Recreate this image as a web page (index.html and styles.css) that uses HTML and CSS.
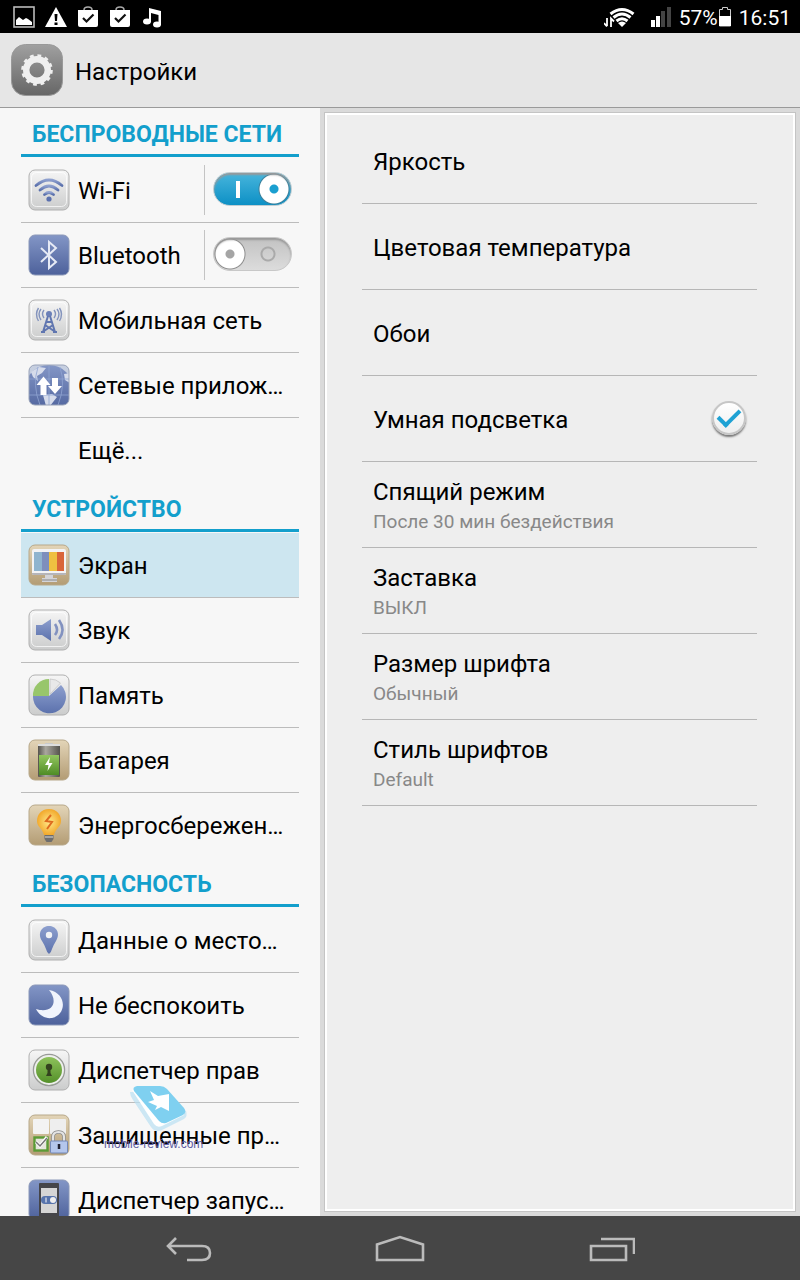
FILE: index.html
```html
<!DOCTYPE html>
<html lang="ru">
<head>
    <meta charset="UTF-8">
    <meta name="viewport" content="width=device-width, initial-scale=1.0">
    <title>Настройки</title>
    <link rel="stylesheet" href="styles.css">
</head>
<body>
    <!-- общие градиенты для иконок -->
    <svg class="defs" aria-hidden="true">
        <defs>
            <linearGradient id="light" x1="0" y1="0" x2="0" y2="1"><stop offset="0" stop-color="#f6f6f6"/><stop offset="1" stop-color="#cbcccc"/></linearGradient>
            <linearGradient id="navy" x1="0" y1="0" x2="0" y2="1"><stop offset="0" stop-color="#8396c6"/><stop offset="1" stop-color="#4d619b"/></linearGradient>
            <linearGradient id="tan" x1="0" y1="0" x2="0" y2="1"><stop offset="0" stop-color="#e3d5b8"/><stop offset="1" stop-color="#b39c74"/></linearGradient>
            <linearGradient id="ink" x1="0" y1="0" x2="0" y2="1"><stop offset="0" stop-color="#8d9fce"/><stop offset="1" stop-color="#5c72ad"/></linearGradient>
            <linearGradient id="green" x1="0" y1="0" x2="0" y2="1"><stop offset="0" stop-color="#93c660"/><stop offset="1" stop-color="#4f8c25"/></linearGradient>
            <linearGradient id="gray" x1="0" y1="0" x2="0" y2="1"><stop offset="0" stop-color="#a0a0a0"/><stop offset="1" stop-color="#666"/></linearGradient>
            <linearGradient id="metal" x1="0" y1="0" x2="1" y2="0"><stop offset="0" stop-color="#55534d"/><stop offset=".35" stop-color="#aaa79e"/><stop offset="1" stop-color="#55534d"/></linearGradient>
            <radialGradient id="glow"><stop offset="0" stop-color="#ffe98a"/><stop offset="1" stop-color="#f2a92c"/></radialGradient>
            <clipPath id="tile"><rect x="1" y="1" width="40" height="40" rx="6"/></clipPath>
        </defs>
    </svg>

    <div class="statusbar">
        <div class="status-left">
            <svg width="22" height="22" viewBox="0 0 22 22"><rect x="1" y="1" width="20" height="20" fill="none" stroke="#bbb" stroke-width="1.6"/><path d="M3 19v-5l3-3 4 3 3-2 2 1 4 3v3z" fill="#fff"/></svg>
            <svg width="22" height="22" viewBox="0 0 22 22"><path d="M11 1l11 20H0z" fill="#fff"/><path d="M9.500 8h3l-.5 7h-2zM9.500 16.500h3v2.500h-3z" fill="#000"/></svg>
            <svg width="22" height="22" viewBox="0 0 22 22"><path d="M7 6V4q0-3 4-3t4 3v2" fill="none" stroke="#aaa" stroke-width="1.500"/><path d="M1 4h20v15q0 2-2 2H3q-2 0-2-2z" fill="#fff"/><path d="M6 12l3.500 3.500 7-7" fill="none" stroke="#111" stroke-width="2.200"/></svg>
            <svg width="22" height="22" viewBox="0 0 22 22"><path d="M7 6V4q0-3 4-3t4 3v2" fill="none" stroke="#aaa" stroke-width="1.500"/><path d="M1 4h20v15q0 2-2 2H3q-2 0-2-2z" fill="#fff"/><path d="M6 12l3.500 3.500 7-7" fill="none" stroke="#111" stroke-width="2.200"/></svg>
            <svg width="22" height="22" viewBox="0 0 22 22"><path d="M8 2l12 3v14h-2.500V9L10 7v9H8z" fill="#fff"/><ellipse cx="6" cy="15.500" rx="4" ry="3" fill="#fff"/><ellipse cx="16" cy="18.500" rx="4" ry="3" fill="#fff"/></svg>
        </div>
        <div class="status-right">
            <svg class="wifi" width="32" height="22" viewBox="0 0 32 22"><path d="M18 21l-4-4q4-3 8 0z" fill="#fff"/><g fill="none" stroke="#fff" stroke-width="3"><path d="M6.500 8q11.500-9 23 0"/><path d="M9.500 11.500q8.500-7 17 0"/><path d="M12.500 15q5.500-4.500 11 0"/></g><path d="M3 12v8M0 17l3 3.500M7 21v-8.500l3 3" fill="none" stroke="#fff" stroke-width="1.800"/></svg>
            <svg width="22" height="22" viewBox="0 0 22 22"><path d="M1 14h4v7H1zM6 10h4v11H6z" fill="#fff"/><path d="M11 5h4v16h-4zM17 1h4v20h-4z" fill="#444"/></svg>
            <span class="percent">57%</span>
            <svg width="14" height="22" viewBox="0 0 14 22"><path d="M1.500 20V3.500h3v-2h5v2h3V20z" fill="none" stroke="#ccc"/><path d="M1 10h12v10H1z" fill="#fff"/></svg>
            <span class="clock">16:51</span>
        </div>
    </div>

    <header class="appbar">
        <svg width="52" height="52" viewBox="0 0 52 52">
            <rect x=".5" y=".5" width="51" height="51" rx="14" fill="url(#gray)" stroke="#999"/>
            <circle cx="26" cy="26" r="10.800" fill="none" stroke="#efefef" stroke-width="6.400"/>
            <circle cx="26" cy="26" r="14.200" fill="none" stroke="#efefef" stroke-width="3.200" stroke-dasharray="3.717 3.717"/>
        </svg>
        <h1>Настройки</h1>
    </header>

    <div class="content">
        <nav class="sidebar">
            <h2>БЕСПРОВОДНЫЕ СЕТИ</h2>
            <ul>
                <li>
                    <a href="#wifi">
                        <svg class="icon" viewBox="0 0 42 42"><rect x="1" y="1" width="40" height="40" rx="6" fill="url(#light)" stroke="#b0b0b0"/><rect x="3.500" y="3.500" width="35" height="34" rx="5" fill="none" stroke="#fff" opacity=".7"/><g fill="none" stroke="url(#ink)" stroke-width="2.800" stroke-linecap="round"><path d="M8 16.500q13-11 26 0"/><path d="M12 21q9-8 18 0"/><path d="M16.500 25.500q4.500-4 9 0"/></g><circle cx="21" cy="30" r="2.600" fill="#5a70ae"/></svg>
                        <span>Wi-Fi</span>
                    </a>
                    <label class="toggle"><input type="checkbox" aria-label="Wi-Fi" checked></label>
                </li>
                <li>
                    <a href="#bluetooth">
                        <svg class="icon" viewBox="0 0 42 42"><rect x="1" y="1" width="40" height="40" rx="6" fill="url(#navy)" stroke="#8b98b8"/><path d="M13 14l15 14-7 6V8l7 6-15 14" fill="none" stroke="#e6eaf5" stroke-width="2"/></svg>
                        <span>Bluetooth</span>
                    </a>
                    <label class="toggle"><input type="checkbox" aria-label="Bluetooth"></label>
                </li>
                <li>
                    <a href="#mobile">
                        <svg class="icon" viewBox="0 0 42 42"><rect x="1" y="1" width="40" height="40" rx="6" fill="url(#light)" stroke="#b0b0b0"/><rect x="3.500" y="3.500" width="35" height="34" rx="5" fill="none" stroke="#fff" opacity=".7"/><circle cx="21" cy="15" r="3" fill="#6b80b8"/><path d="M20 17l-5 16M22 17l5 16M17 26l9 6M25 26l-9 6M18 23h6M13 33h4M25 33h4" fill="none" stroke="#6076b0" stroke-width="2"/><path d="M16 11q-3 4 0 8M13 10q-4 5 0 11M10.500 9q-4 6 0 13M26 11q3 4 0 8M29 10q4 5 0 11M31.500 9q4 6 0 13" fill="none" stroke="#8494bd" stroke-width="1.400"/></svg>
                        <span>Мобильная сеть</span>
                    </a>
                </li>
                <li>
                    <a href="#netapps">
                        <svg class="icon" viewBox="0 0 42 42"><g clip-path="url(#tile)"><path d="M0 0h42v42H0z" fill="#c6cfe0"/><circle cx="21" cy="25" r="24" fill="url(#navy)"/><path d="M3 8l8-5 7 1-4 5-5 3 1 5-5-4zM36 10l6-1v10l-5-3zM15 31l9-1 5 3-7 9h-4z" fill="#d6dceb"/><path d="M21 1v40M10 3q-6 18 2 38M32 3q6 18-2 38M1 15h40M1 31h40" fill="none" stroke="#91a4d2" stroke-width=".8"/></g><rect x="1" y="1" width="40" height="40" rx="6" fill="none" stroke="#98a2b8"/><path d="M15.500 12.500l7 8.500h-4v10h-6V21h-4zM27 30l-7-8h4V14h6v8h4z" fill="#fff"/></svg>
                        <span>Сетевые приложения</span>
                    </a>
                </li>
                <li>
                    <a href="#more">
                        <span class="icon"></span>
                        <span>Ещё...</span>
                    </a>
                </li>
            </ul>

            <h2>УСТРОЙСТВО</h2>
            <ul>
                <li class="active">
                    <a href="#display">
                        <svg class="icon" viewBox="0 0 42 42"><rect x="1" y="1" width="40" height="40" rx="6" fill="url(#tan)" stroke="#b7a88a"/><path d="M17 30h8v4h4v4H14v-4h3z" fill="#d4d4d8"/><path d="M14 36h15" stroke="#888"/><rect x="4" y="5" width="34" height="26" rx="2" fill="#f3f3f5"/><path d="M4 29h34v1q0 1-2 1H6q-2 0-2-1z" fill="#b5b5ba"/><path d="M6 8h8v19H6z" fill="#8fb4cf"/><path d="M14 8h7v19h-7z" fill="#7e8fbd"/><path d="M21 8h8v19h-8z" fill="#efc041"/><path d="M29 8h7v19h-7z" fill="#d9653a"/></svg>
                        <span>Экран</span>
                    </a>
                </li>
                <li>
                    <a href="#sound">
                        <svg class="icon" viewBox="0 0 42 42"><rect x="1" y="1" width="40" height="40" rx="6" fill="url(#light)" stroke="#b0b0b0"/><rect x="3.500" y="3.500" width="35" height="34" rx="5" fill="none" stroke="#fff" opacity=".7"/><path d="M8 16h6l9-6v22l-9-6H8z" fill="url(#ink)"/><path d="M27 15q4 6 0 11M31 11q7 10 0 19" fill="none" stroke="#8292c0" stroke-width="2.600"/></svg>
                        <span>Звук</span>
                    </a>
                </li>
                <li>
                    <a href="#storage">
                        <svg class="icon" viewBox="0 0 42 42"><rect x="1" y="1" width="40" height="40" rx="6" fill="url(#light)" stroke="#b0b0b0"/><path d="M21 22H5a16.500 16.500 0 1 0 28-11z" fill="url(#ink)"/><path d="M21 22V5A16 16 0 0 0 5 22z" fill="#98c66b"/><path d="M22 20V5q6 0 10.500 4z" fill="#e9e9e9" stroke="#bbb" stroke-width=".6"/></svg>
                        <span>Память</span>
                    </a>
                </li>
                <li>
                    <a href="#battery">
                        <svg class="icon" viewBox="0 0 42 42"><rect x="1" y="1" width="40" height="40" rx="6" fill="url(#tan)" stroke="#b7a88a"/><path d="M17 4h8v3h-8z" fill="#c9c9c9"/><rect x="10" y="5" width="22" height="33" rx="1" fill="url(#metal)"/><path d="M10 5h22v2H10z" fill="#ddd"/><path d="M11 16h20v20H11z" fill="url(#green)"/><path d="M22 18l-5 8h3.500l-1 6 5-8H21z" fill="#fff"/></svg>
                        <span>Батарея</span>
                    </a>
                </li>
                <li>
                    <a href="#power">
                        <svg class="icon" viewBox="0 0 42 42"><rect x="1" y="1" width="40" height="40" rx="6" fill="url(#tan)" stroke="#b7a88a"/><path d="M21 5C13 5 9 11 9 17c0 6 6 8 7 14h10c1-6 7-8 7-14 0-6-4-12-12-12z" fill="url(#glow)"/><path d="M16.500 31h9v4l-2 3h-5l-2-3z" fill="#6d6d6d"/><path d="M17 33h8" stroke="#ddd"/><path d="M23 11l-5 6 6 1-5 7" fill="none" stroke="#de6a1e" stroke-width="2"/></svg>
                        <span>Энергосбережение</span>
                    </a>
                </li>
            </ul>

            <h2>БЕЗОПАСНОСТЬ</h2>
            <ul>
                <li>
                    <a href="#location">
                        <svg class="icon" viewBox="0 0 42 42"><rect x="1" y="1" width="40" height="40" rx="6" fill="url(#light)" stroke="#b0b0b0"/><rect x="3.500" y="3.500" width="35" height="34" rx="5" fill="none" stroke="#fff" opacity=".7"/><path d="M21 35q-2-1-3-5-2-5-4-8c-5-8 0-15 7-15s12 7 7 15q-2 3-4 8-1 4-3 5z" fill="url(#ink)"/><circle cx="21" cy="16" r="3.200" fill="#f1f2f5"/></svg>
                        <span>Данные о местоположении</span>
                    </a>
                </li>
                <li>
                    <a href="#dnd">
                        <svg class="icon" viewBox="0 0 42 42"><rect x="1" y="1" width="40" height="40" rx="6" fill="url(#navy)" stroke="#8b98b8"/><path d="M21 6C39 9 39 31 24 34 17 35 11 31 8 25 24 30 31 18 21 6z" fill="#f1f4fc"/></svg>
                        <span>Не беспокоить</span>
                    </a>
                </li>
                <li>
                    <a href="#permissions">
                        <svg class="icon" viewBox="0 0 42 42"><rect x="1" y="1" width="40" height="40" rx="6" fill="url(#light)" stroke="#b0b0b0"/><circle cx="21" cy="21" r="15.500" fill="url(#green)" stroke="#999" stroke-width="1.500"/><circle cx="21" cy="21" r="14" fill="none" stroke="#eee" stroke-width="2"/><circle cx="21" cy="18" r="3.200" fill="#34421f"/><path d="M19.500 19h3v5l1.500 3h-6l1.500-3z" fill="#34421f"/></svg>
                        <span>Диспетчер прав</span>
                    </a>
                </li>
                <li>
                    <a href="#protected">
                        <svg class="icon" viewBox="0 0 42 42"><rect x="1" y="1" width="40" height="40" rx="6" fill="url(#tan)" stroke="#b7a88a"/><rect x="5" y="5" width="16" height="15" rx="1" fill="#f3f3f3"/><rect x="22" y="5" width="16" height="15" rx="1" fill="#eee"/><rect x="6.500" y="23.500" width="13" height="13" fill="#e6e6dd" stroke="#5b9b36" stroke-width="2.400"/><path d="M8 28l4 4 7-9" fill="none" stroke="#fff" stroke-width="3"/><path d="M8 28l4 4 7-8" fill="none" stroke="#777" stroke-width="1.500"/><path d="M25 27v-4q0-5 5.500-5t5.500 5v4" fill="none" stroke="#888" stroke-width="3.600"/><path d="M25 27v-4q0-5 5.500-5t5.500 5v4" fill="none" stroke="#e4e4e4" stroke-width="2.200"/><rect x="22.500" y="27" width="17" height="12" rx="1" fill="#b4c6ec" stroke="#7388b8"/><path d="M31 30v5" stroke="#223" stroke-width="2.500"/></svg>
                        <span>Защищенные приложения</span>
                    </a>
                </li>
                <li>
                    <a href="#startup">
                        <svg class="icon" viewBox="0 0 42 42"><rect x="1" y="1" width="40" height="40" rx="6" fill="url(#navy)" stroke="#8b98b8"/><rect x="11" y="4" width="20" height="36" rx="1" fill="#454549"/><path d="M13 9h16v25H13z" fill="#d5d5d5"/><rect x="13" y="17" width="16" height="8" rx="4" fill="#5673ac"/><circle cx="25" cy="21" r="3" fill="#eee"/><path d="M18 18.500v5" stroke="#fff"/></svg>
                        <span>Диспетчер запуска</span>
                    </a>
                </li>
            </ul>

            <div class="watermark">
                <svg width="60" height="50" viewBox="0 0 60 50"><path d="M2 6q0 4 3 8l18 27q4 6 11 3l22-11q4-3 2-8L18 6z" fill="#b9dff2" opacity=".7"/><path d="M4 4l22 34q3 4 8 2l22-11v-6L10 0z" fill="#fff"/><path d="M9 0h23q4 0 7 3l17 19q3 4-1 7l-17 8q-4 1-7-2L6 5q-2-4 3-5z" fill="#7fd0f0"/><path d="M22 5l8 5 11-2v17l-8-4-6 3 2-4-9-4 6-2z" fill="#fff"/></svg>
                <span>mobile-review.com</span>
            </div>
        </nav>

        <main class="panel">
            <ul class="options">
                <li><a href="#brightness">Яркость</a></li>
                <li><a href="#temperature">Цветовая температура</a></li>
                <li><a href="#wallpaper">Обои</a></li>
                <li>
                    <label for="smart">Умная подсветка</label>
                    <input type="checkbox" id="smart" class="check" checked>
                </li>
                <li><a href="#sleep">Спящий режим<small>После 30 мин бездействия</small></a></li>
                <li><a href="#dream">Заставка<small>ВЫКЛ</small></a></li>
                <li><a href="#fontsize">Размер шрифта<small>Обычный</small></a></li>
                <li><a href="#fontstyle">Стиль шрифтов<small>Default</small></a></li>
            </ul>
        </main>
    </div>

    <footer class="navbar">
        <button type="button" aria-label="Назад"><svg width="48" height="28" viewBox="0 0 48 28"><path d="M11 3L3 11l8 8M3 11h34q8 0 8 7t-8 7H22" fill="none" stroke="#bbb" stroke-width="2.600"/></svg></button>
        <button type="button" aria-label="Домой"><svg width="50" height="28" viewBox="0 0 50 28"><path d="M2 9.500L25 2l23 7.500V25H2z" fill="none" stroke="#bbb" stroke-width="2.600"/></svg></button>
        <button type="button" aria-label="Недавние"><svg width="48" height="28" viewBox="0 0 48 28"><path d="M4 11h35v14H4zM14 4h33v15" fill="none" stroke="#bbb" stroke-width="2.600"/></svg></button>
    </footer>
</body>
</html>
```
FILE: styles.css
```css
* {
    margin: 0;
    padding: 0;
    box-sizing: border-box;
}

body {
    height: 100vh;
    display: flex;
    flex-direction: column;
    font-family: Roboto, sans-serif;
    font-size: 24px;
    color: #000;
    background: #f7f7f7;
}

a {
    color: inherit;
    text-decoration: none;
}

ul {
    list-style: none;
}

svg {
    display: block;
    flex: none;
}

.defs {
    position: absolute;
    width: 0;
    height: 0;
}

/* status bar */
.statusbar {
    height: 33px;
    flex: none;
    display: flex;
    justify-content: space-between;
    align-items: center;
    padding: 0 9px 0 13px;
    background: #000;
    color: #fff;
    font-size: 21px;
}

.status-left,
.status-right {
    display: flex;
    align-items: center;
}

.status-left {
    gap: 10px;
}

.wifi {
    margin-right: 14px;
}

.percent,
.clock {
    padding-top: 2px;
    margin-left: 7px;
}

/* header */
.appbar {
    height: 75px;
    flex: none;
    display: flex;
    align-items: center;
    gap: 12px;
    padding: 0 11px;
    background: #e6e6e6;
    border-bottom: 1px solid #9a9a9a;
}

.appbar h1 {
    padding-top: 3px;
    font-size: 24px;
    font-weight: 400;
}

.content {
    flex: 1;
    min-height: 0;
    display: grid;
    grid-template-columns: 2fr 3fr;
}

/* sidebar */
.sidebar {
    position: relative;
    padding: 0 21px;
    overflow: hidden;
}

.sidebar h2 {
    height: 49px;
    padding-left: 11px;
    margin-bottom: 1px;
    line-height: 53px;
    font-size: 23px;
    font-weight: 700;
    color: #139fcc;
    border-bottom: 3px solid #139fcc;
    white-space: nowrap;
}

.sidebar li {
    height: 65px;
    display: flex;
    align-items: center;
    border-bottom: 1px solid #bcbcbc;
}

.sidebar li:last-child {
    border-bottom-color: transparent;
}

.sidebar li.active {
    background: #cde6f0;
}

.sidebar li a {
    flex: 1;
    min-width: 0;
    display: flex;
    align-items: center;
    gap: 8px;
    padding: 0 10px 0 7px;
}

.sidebar li a span:last-child {
    padding-top: 2px;
    overflow: hidden;
    text-overflow: ellipsis;
    white-space: nowrap;
}

.icon {
    width: 42px;
    height: 42px;
    flex: none;
}

.toggle {
    height: 50px;
    display: flex;
    align-items: center;
    padding: 0 7px 2px 8px;
    border-left: 1px solid #c4c4c4;
}

.toggle input {
    appearance: none;
    width: 79px;
    height: 34px;
    border-radius: 17px;
    border: 1px solid #c8c8c8;
    box-shadow: inset 0 2px 2px #999;
    background:
        radial-gradient(circle at 16px 16px, #a5a5a5 0 4px, #fff 5px 14px, #8d8d8d 15px, transparent 16px),
        radial-gradient(circle at 54px 16px, transparent 5px, #aaa 6px 7px, transparent 8px),
        linear-gradient(#c2c2c2, #dcdcdc);
}

.toggle input:checked {
    border-color: #c0cdd2;
    background:
        radial-gradient(circle at 60px 16px, #1a9fd0 0 4px, #fff 5px 14px, #397f9b 15px, transparent 16px),
        linear-gradient(#fff, #fff) 22px 8px / 4px 17px no-repeat,
        linear-gradient(#47b5dc, #0d90c5);
}

.watermark {
    position: absolute;
    left: 104px;
    top: 978px;
    font-family: "Liberation Sans", sans-serif;
    font-size: 12px;
    line-height: 16px;
    color: #5f5ca3;
    pointer-events: none;
}

.watermark svg {
    margin-left: 24px;
}

/* right panel */
.panel {
    padding: 6px 39px 0 38px;
    background: #eee;
    border: 4px solid #dadada;
    outline: 1px solid #c4c4c4;
    outline-offset: -5px;
    box-shadow: inset 0 0 0 3px #fff;
}

.options li {
    height: 86px;
    display: flex;
    align-items: center;
    justify-content: space-between;
    padding: 2px 11px 0;
    border-bottom: 1px solid #b6b6b6;
}

.options a {
    flex: 1;
    line-height: 32px;
}

.options small {
    display: block;
    font-size: 19px;
    line-height: 28px;
    color: #888;
}

.check {
    appearance: none;
    width: 34px;
    height: 34px;
    margin-bottom: 4px;
    border-radius: 50%;
    border: 2px solid #c6c6c6;
    background: linear-gradient(#fff, #eee);
    box-shadow: 0 2px 2px #777;
    display: flex;
    align-items: center;
    justify-content: center;
}

.check:checked::after {
    content: "";
    width: 18px;
    height: 9px;
    border-left: 4px solid #1fa2d4;
    border-bottom: 4px solid #1fa2d4;
    transform: rotate(-45deg);
    margin-bottom: 5px;
}

/* bottom buttons */
.navbar {
    height: 64px;
    flex: none;
    display: flex;
    justify-content: center;
    align-items: center;
    gap: 162px;
    padding-top: 2px;
    background: #464646;
}

.navbar button {
    border: none;
    background: none;
    cursor: pointer;
}
```
